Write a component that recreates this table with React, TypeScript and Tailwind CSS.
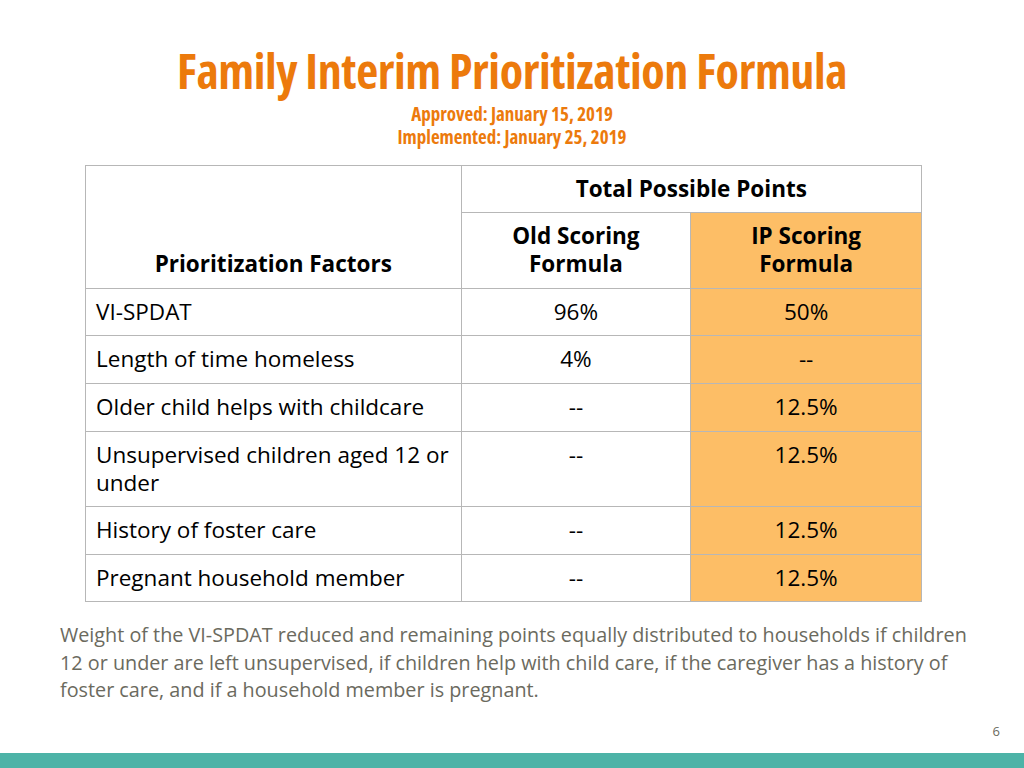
export default function App() {
  const rows = [
    { label: 'VI-SPDAT', old: '96%', ip: '50%', h: 'h-[47px]' },
    { label: 'Length of time homeless', old: '4%', ip: '--', h: 'h-[48px]' },
    { label: 'Older child helps with childcare', old: '--', ip: '12.5%', h: 'h-[48px]' },
    { label: 'Unsupervised children aged 12 or under', old: '--', ip: '12.5%', h: 'h-[75px]' },
    { label: 'History of foster care', old: '--', ip: '12.5%', h: 'h-[48px]' },
    { label: 'Pregnant household member', old: '--', ip: '12.5%', h: 'h-[47px]' },
  ];

  const cell = 'border border-[#b7b7b7] px-[10px] pt-[9px] pb-0 align-top';

  return (
    <div className="w-[1024px] h-[768px] bg-white flex flex-col font-['Open_Sans',sans-serif] overflow-hidden">
      {/* Title */}
      <div className="pt-[39px] text-center text-[#ec7a0c] font-bold [font-stretch:75%] font-['Open_Sans',sans-serif]">
        <h1 className="text-[48px] leading-[64px] tracking-[-0.4px]">Family Interim Prioritization Formula</h1>
        <p className="text-[19px] leading-[23px]">Approved: January 15, 2019</p>
        <p className="text-[19px] leading-[23px]">Implemented: January 25, 2019</p>
      </div>

      {/* Table */}
      <div className="pt-[16px] pl-[85px]">
        <table className="border-collapse w-[837px] text-[22.5px] leading-[28px] text-black">
          <colgroup>
            <col className="w-[376px]" />
            <col className="w-[230px]" />
            <col className="w-[231px]" />
          </colgroup>
          <thead>
            <tr className="h-[47px]">
              <th rowSpan={2} className="border border-[#b7b7b7] px-[10px] pb-[10px] align-bottom font-bold text-center">
                Prioritization Factors
              </th>
              <th colSpan={2} className="border border-[#b7b7b7] px-[10px] py-[9px] align-middle font-bold text-center">
                Total Possible Points
              </th>
            </tr>
            <tr className="h-[76px]">
              <th className="border border-[#b7b7b7] px-[10px] py-[9px] align-top font-bold text-center">
                Old Scoring<br />Formula
              </th>
              <th className="border border-[#b7b7b7] bg-[#fdbe66] px-[10px] py-[9px] align-top font-bold text-center">
                IP Scoring<br />Formula
              </th>
            </tr>
          </thead>
          <tbody>
            {rows.map(r => (
              <tr key={r.label} className={r.h}>
                <td className={cell}>{r.label}</td>
                <td className={`${cell} text-center`}>{r.old}</td>
                <td className={`${cell} text-center bg-[#fdbe66]`}>{r.ip}</td>
              </tr>
            ))}
          </tbody>
        </table>
      </div>

      {/* Note */}
      <p className="pl-[60px] pr-[30px] pt-[19px] text-[19.8px] leading-[27.5px] text-[#6b6a5e]">
        Weight of the VI-SPDAT reduced and remaining points equally distributed to households if children 12 or under are left unsupervised, if children help with child care, if the caregiver has a history of foster care, and if a household member is pregnant.
      </p>

      <div className="flex-1 flex items-end justify-end pr-[24px] pb-[12px]">
        <span className="text-[13px] text-[#6b6a5e]">6</span>
      </div>
      <div className="h-[15px] bg-[#4db3a7]" />
    </div>
  );
}
